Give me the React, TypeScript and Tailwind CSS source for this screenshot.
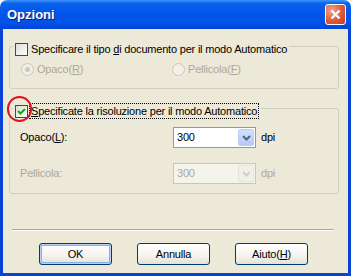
import type { ReactNode } from 'react'

function CheckBox({ checked }: { checked?: boolean }) {
  return (
    <span className="size-[13px] shrink-0 border border-[#1c5180] bg-[linear-gradient(135deg,#dcdcd7_0%,#ffffff_100%)] flex items-center justify-center">
      {checked ? (
        <svg width="9" height="9" viewBox="0 0 9 9" aria-hidden>
          <path d="M1 4 L3.5 6.5 L8 2" stroke="#21a121" strokeWidth="2" fill="none" />
        </svg>
      ) : null}
    </span>
  )
}

function Radio({ selected }: { selected?: boolean }) {
  return (
    <span className="size-[13px] shrink-0 rounded-full border border-[#cac8bb] bg-[#f2f0e6] flex items-center justify-center">
      {selected ? <span className="size-[5px] rounded-full bg-[#cac8bb]" /> : null}
    </span>
  )
}

function Select({ disabled }: { disabled?: boolean }) {
  return (
    <div
      className={
        disabled
          ? 'w-[83px] h-[21px] border border-[#c9c7ba] bg-[#f5f4ea] flex items-center text-[#aca899]'
          : 'w-[83px] h-[21px] border border-[#7f9db9] bg-white flex items-center text-black'
      }
    >
      <span className="flex-1 pl-[3px]">300</span>
      <span
        className={
          disabled
            ? 'w-[16px] h-[17px] mr-[1px] rounded-[2px] border border-[#e4e3dc] bg-[#f0efe8] flex items-center justify-center'
            : 'w-[16px] h-[17px] mr-[1px] rounded-[2px] border border-[#b9cdf4] bg-[linear-gradient(to_bottom,#d2e0fd_0%,#b6caf7_100%)] flex items-center justify-center'
        }
      >
        <svg width="9" height="6" viewBox="0 0 9 6" aria-hidden>
          <path
            d="M1 1 L4.5 4.5 L8 1"
            stroke={disabled ? '#d4d2c8' : '#4d6185'}
            strokeWidth="2"
            fill="none"
          />
        </svg>
      </span>
    </div>
  )
}

function Btn({ children, primary }: { children: ReactNode; primary?: boolean }) {
  return (
    <button
      type="button"
      className={
        'w-[73px] h-[22px] rounded-[3px] border border-[#003c74] bg-[linear-gradient(to_bottom,#ffffff_0%,#f4f3ee_60%,#e3e0d6_100%)] text-black flex items-center justify-center ' +
        (primary ? 'shadow-[inset_0_0_0_1px_#b9d1f5,inset_0_0_0_2px_#89ade4]' : '')
      }
    >
      {children}
    </button>
  )
}

export default function App() {
  return (
    <div className="w-[351px] h-[276px] flex flex-col bg-white font-['Liberation_Sans',Arial,sans-serif] text-[11px] tracking-[-0.2px] leading-[13px] select-none">
      {/* title bar */}
      <div className="h-[29px] shrink-0 rounded-t-[7px] bg-[linear-gradient(to_bottom,#3d95ff_0%,#0a62ec_12%,#0056ea_45%,#0053e6_80%,#0043d4_100%)] flex items-center pl-[7px] pr-[5px]">
        <span className="flex-1 text-white font-bold text-[13px] tracking-normal leading-[15px] [text-shadow:1px_1px_0_#0a1e7a]">
          Opzioni
        </span>
        <span className="size-[21px] rounded-[3px] border border-white bg-[radial-gradient(circle_at_30%_30%,#f2a48a_0%,#e0583b_55%,#c6391c_100%)] flex items-center justify-center">
          <svg width="11" height="11" viewBox="0 0 11 11" aria-hidden>
            <path d="M1.5 1.5 L9.5 9.5 M9.5 1.5 L1.5 9.5" stroke="white" strokeWidth="2.2" />
          </svg>
        </span>
      </div>

      <div className="flex-1 flex bg-[#0842d8] px-[3px] pb-[3px]">
        <div className="relative flex-1 bg-[#ece9d8] flex flex-col pl-[6px]">
          {/* group 1 */}
          <div className="mt-[17px] w-[330px] h-[43px] rounded-[3px] border border-[#d0d0bf] flex flex-col">
            <div className="-mt-[4px] ml-[3px] self-start flex items-center gap-[3px] bg-[#ece9d8] px-[2px] text-black">
              <CheckBox />
              <span>
                Specificare il tipo <u>d</u>i documento per il modo Automatico
              </span>
            </div>
            <div className="mt-[7px] flex items-center text-[#aca899]">
              <div className="w-[162px] pl-[11px] flex items-center gap-[3px]">
                <Radio selected />
                <span>
                  Opaco(<u>R</u>)
                </span>
              </div>
              <div className="flex items-center gap-[3px]">
                <Radio />
                <span>
                  Pellicola(<u>F</u>)
                </span>
              </div>
            </div>
          </div>

          {/* group 2 */}
          <div className="mt-[19px] w-[330px] h-[86px] rounded-[3px] border border-[#d0d0bf] flex flex-col">
            <div className="-mt-[6px] ml-[3px] self-start flex items-center gap-[1px] bg-[#ece9d8] px-[2px] text-black">
              <CheckBox checked />
              <span className="border border-dotted border-black px-[1px] leading-[14px]">
                <u>S</u>pecificate la risoluzione per il modo Automatico
              </span>
            </div>
            <div className="mt-[8px] flex items-center text-black">
              <span className="w-[163px] pl-[10px]">
                Opaco(<u>L</u>):
              </span>
              <Select />
              <span className="ml-[5px]">dpi</span>
            </div>
            <div className="mt-[15px] flex items-center text-[#aca899]">
              <span className="w-[163px] pl-[10px]">Pellicola:</span>
              <Select disabled />
              <span className="ml-[5px]">dpi</span>
            </div>
          </div>

          {/* separator */}
          <div className="mt-[35px] ml-[3px] w-[322px] h-[2px] border-t border-[#aca899] border-b border-b-white" />

          {/* buttons */}
          <div className="mt-[12px] pl-[30px] flex gap-[25px]">
            <Btn primary>OK</Btn>
            <Btn>Annulla</Btn>
            <Btn>
              Aiuto(<u>H</u>)
            </Btn>
          </div>

          {/* annotation circle */}
          <div className="absolute left-[4px] top-[67px] w-[25px] h-[26px] rounded-full border-2 border-[#e0131a]" />
        </div>
      </div>
    </div>
  )
}
